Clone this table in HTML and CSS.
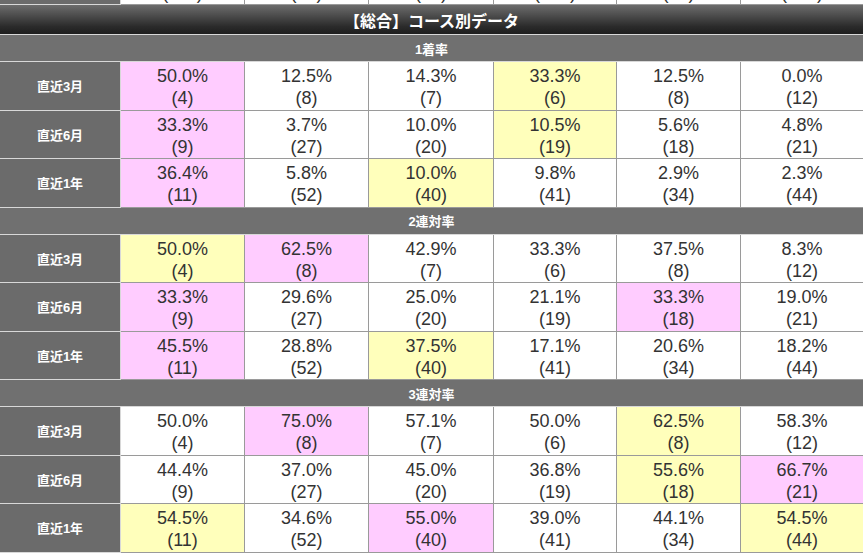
FILE: index.html
```html
<!DOCTYPE html>
<html lang="ja">
<head>
<meta charset="utf-8">
<title>コース別データ</title>
<link rel="stylesheet" href="styles.css">
</head>
<body>
<table class="stats">
  <colgroup>
    <col class="c-label">
    <col class="c-a">
    <col class="c-b">
    <col class="c-c">
    <col class="c-d">
    <col class="c-e">
    <col class="c-f">
  </colgroup>
  <tbody>
    <tr class="data prev">
      <th class="label">直近1年</th>
      <td>0.0%<br>(117)</td>
      <td>0.0%<br>(52)</td>
      <td>0.0%<br>(40)</td>
      <td>0.0%<br>(141)</td>
      <td>0.0%<br>(34)</td>
      <td>0.0%<br>(144)</td>
    </tr>
    <tr class="title">
      <td colspan="7">【総合】コース別データ</td>
    </tr>
    <tr class="band">
      <td colspan="7">1着率</td>
    </tr>
    <tr class="data">
      <th class="label">直近3月</th>
      <td class="pink">50.0%<br>(4)</td>
      <td>12.5%<br>(8)</td>
      <td>14.3%<br>(7)</td>
      <td class="yellow">33.3%<br>(6)</td>
      <td>12.5%<br>(8)</td>
      <td>0.0%<br>(12)</td>
    </tr>
    <tr class="data">
      <th class="label">直近6月</th>
      <td class="pink">33.3%<br>(9)</td>
      <td>3.7%<br>(27)</td>
      <td>10.0%<br>(20)</td>
      <td class="yellow">10.5%<br>(19)</td>
      <td>5.6%<br>(18)</td>
      <td>4.8%<br>(21)</td>
    </tr>
    <tr class="data">
      <th class="label">直近1年</th>
      <td class="pink">36.4%<br>(11)</td>
      <td>5.8%<br>(52)</td>
      <td class="yellow">10.0%<br>(40)</td>
      <td>9.8%<br>(41)</td>
      <td>2.9%<br>(34)</td>
      <td>2.3%<br>(44)</td>
    </tr>
    <tr class="band">
      <td colspan="7">2連対率</td>
    </tr>
    <tr class="data">
      <th class="label">直近3月</th>
      <td class="yellow">50.0%<br>(4)</td>
      <td class="pink">62.5%<br>(8)</td>
      <td>42.9%<br>(7)</td>
      <td>33.3%<br>(6)</td>
      <td>37.5%<br>(8)</td>
      <td>8.3%<br>(12)</td>
    </tr>
    <tr class="data">
      <th class="label">直近6月</th>
      <td class="pink">33.3%<br>(9)</td>
      <td>29.6%<br>(27)</td>
      <td>25.0%<br>(20)</td>
      <td>21.1%<br>(19)</td>
      <td class="pink">33.3%<br>(18)</td>
      <td>19.0%<br>(21)</td>
    </tr>
    <tr class="data">
      <th class="label">直近1年</th>
      <td class="pink">45.5%<br>(11)</td>
      <td>28.8%<br>(52)</td>
      <td class="yellow">37.5%<br>(40)</td>
      <td>17.1%<br>(41)</td>
      <td>20.6%<br>(34)</td>
      <td>18.2%<br>(44)</td>
    </tr>
    <tr class="band">
      <td colspan="7">3連対率</td>
    </tr>
    <tr class="data">
      <th class="label">直近3月</th>
      <td>50.0%<br>(4)</td>
      <td class="pink">75.0%<br>(8)</td>
      <td>57.1%<br>(7)</td>
      <td>50.0%<br>(6)</td>
      <td class="yellow">62.5%<br>(8)</td>
      <td>58.3%<br>(12)</td>
    </tr>
    <tr class="data">
      <th class="label">直近6月</th>
      <td>44.4%<br>(9)</td>
      <td>37.0%<br>(27)</td>
      <td>45.0%<br>(20)</td>
      <td>36.8%<br>(19)</td>
      <td class="yellow">55.6%<br>(18)</td>
      <td class="pink">66.7%<br>(21)</td>
    </tr>
    <tr class="data">
      <th class="label">直近1年</th>
      <td class="yellow">54.5%<br>(11)</td>
      <td>34.6%<br>(52)</td>
      <td class="pink">55.0%<br>(40)</td>
      <td>39.0%<br>(41)</td>
      <td>44.1%<br>(34)</td>
      <td class="yellow">54.5%<br>(44)</td>
    </tr>
  </tbody>
</table>
</body>
</html>
```
FILE: styles.css
```css
* {
  box-sizing: border-box;
}

html, body {
  margin: 0;
  padding: 0;
  background: #ffffff;
}

body {
  font-family: "Liberation Sans", Arial, "Noto Sans CJK JP", sans-serif;
  color: #333333;
}

.stats {
  width: 863px;
  table-layout: fixed;
  border-collapse: separate;
  border-spacing: 0;
  margin-top: -43px;
}

.c-label { width: 121px; }
.c-a { width: 124px; }
.c-b { width: 124px; }
.c-c { width: 125px; }
.c-d { width: 123px; }
.c-e { width: 124px; }
.c-f { width: 122px; }

.stats td,
.stats th {
  padding: 0;
  text-align: center;
  vertical-align: middle;
}

.data {
  height: 48.5px;
}

.data.prev {
  height: 48px;
}

.data td {
  font-size: 18px;
  line-height: 22px;
  color: #333333;
  background: #ffffff;
  border-right: 1px solid #9a9a9a;
  border-bottom: 1px solid #9a9a9a;
  padding-top: 3px;
}

.data td:last-child {
  border-right: none;
}

.data td.pink {
  background: #ffccff;
}

.data td.yellow {
  background: #ffffbb;
}

.label {
  background: #6b6b6b;
  color: #ffffff;
  font-family: "Liberation Sans", Arial, "Noto Sans CJK JP", sans-serif;
  font-weight: bold;
  font-size: 13px;
  border-right: 1px solid #d8d8d8;
  border-bottom: 1px solid #d8d8d8;
}

.title {
  height: 30px;
}

.title td {
  background: linear-gradient(to bottom, #6c6c6c 0%, #2a2a2a 75%, #1e1e1e 100%);
  color: #ffffff;
  font-family: "Noto Sans CJK JP", sans-serif;
  font-weight: bold;
  font-size: 16px;
  border-bottom: 1px solid #d8d8d8;
}

.band {
  height: 27px;
}

.band td {
  background: #707070;
  color: #ffffff;
  font-family: "Liberation Sans", Arial, "Noto Sans CJK JP", sans-serif;
  font-weight: bold;
  font-size: 13px;
  border-bottom: 1px solid #d8d8d8;
}
```
